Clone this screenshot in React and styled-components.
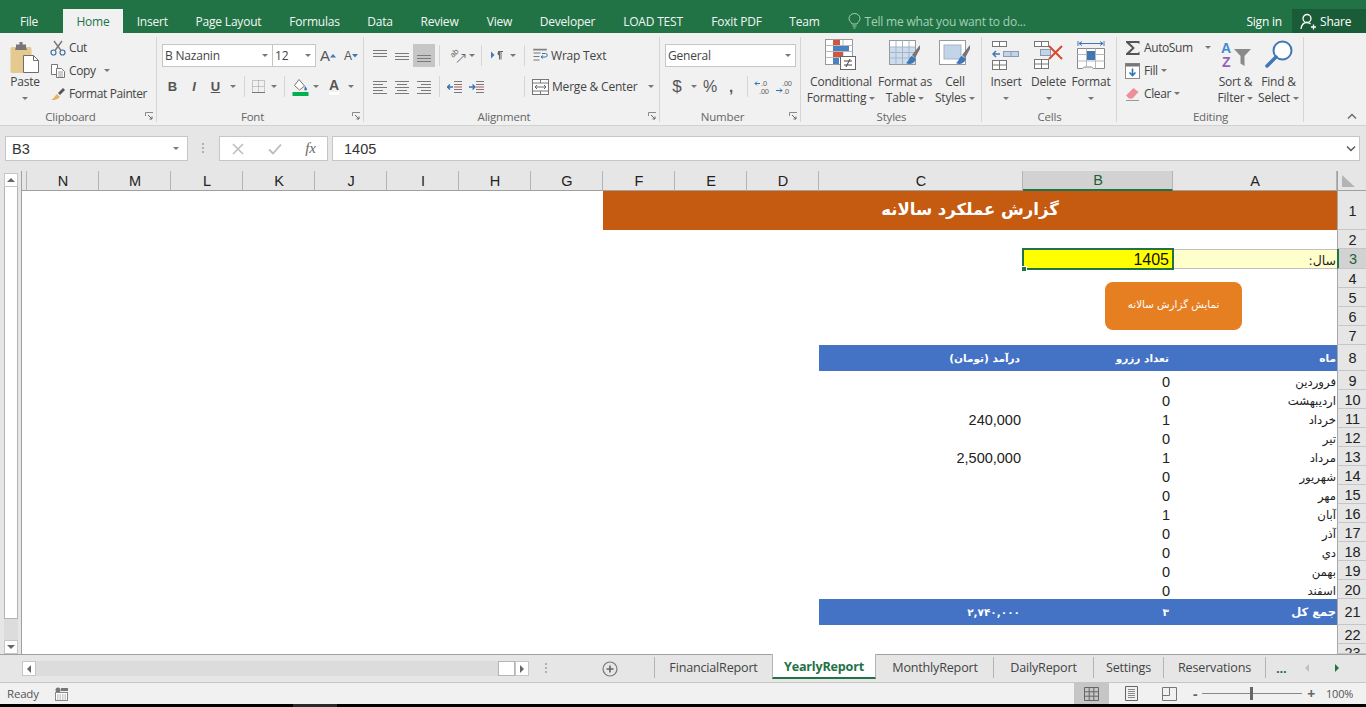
import React from 'react'
import styled, { createGlobalStyle } from 'styled-components'

const GlobalStyle = createGlobalStyle`
  html, body { margin: 0; padding: 0; background: #000; }
  * { box-sizing: border-box; }
`

const UI_FONT = '"Open Sans", "DejaVu Sans", sans-serif'
const CELL_FONT = '"Liberation Sans", Arial, sans-serif'
const FA_FONT = '"DejaVu Sans", sans-serif'

const Page = styled.div`
  width: 1366px;
  height: 707px;
  display: flex;
  flex-direction: column;
  overflow: hidden;
  background: #000;
  font-family: ${UI_FONT};
  font-size: 12px;
  letter-spacing: -0.2px;
  color: #444;
`

/* title bar + ribbon tabs */
const TitleBar = styled.div`
  height: 33px;
  flex: none;
  display: flex;
  align-items: flex-end;
  background: #217346;
  color: #fff;
`
const RibbonTab = styled.div`
  width: ${p => p.$w}px;
  height: 24px;
  display: flex;
  align-items: center;
  justify-content: center;
  color: ${p => (p.$active ? '#217346' : '#f2f7f4')};
  background: ${p => (p.$active ? '#f1f1f1' : 'transparent')};
  &:first-child { margin-right: 5px; }
`
const TellMe = styled.div`
  flex: 1;
  height: 24px;
  margin-left: 14px;
  display: flex;
  align-items: center;
  gap: 4px;
  color: #a5cfb6;
`
const SignIn = styled.div`
  height: 24px;
  margin-right: 10px;
  display: flex;
  align-items: center;
  color: #fff;
`
const ShareBox = styled.div`
  width: 74px;
  height: 24px;
  display: flex;
  align-items: center;
  gap: 3px;
  padding-left: 8px;
  background: #1a5c38;
  color: #fff;
`

/* ribbon */
const Ribbon = styled.div`
  height: 93px;
  flex: none;
  display: flex;
  padding-top: 3px;
  background: #f1f1f1;
  border-bottom: 1px solid #d2d2d2;
  position: relative;
`
const Group = styled.div`
  width: ${p => p.$w}px;
  display: flex;
  flex-direction: column;
  position: relative;
  &::after {
    content: '';
    position: absolute;
    top: 1px;
    right: 0;
    bottom: 3px;
    width: 1px;
    background: #d6d6d6;
  }
`
const GroupBody = styled.div`
  height: 73px;
  display: flex;
  padding-left: ${p => p.$pad || 0}px;
`
const GroupFoot = styled.div`
  height: 16px;
  display: flex;
  align-items: center;
  padding-bottom: 2px;
  font-size: 11.5px;
  color: #666;
`
const GroupLabel = styled.div`
  flex: 1;
  text-align: center;
`
const Launcher = styled.div`
  width: 16px;
  display: flex;
  justify-content: center;
`
const Collapse = styled.div`
  position: absolute;
  right: 9px;
  bottom: 5px;
  display: flex;
`
const BigButton = styled.div`
  width: ${p => p.$w}px;
  display: flex;
  flex-direction: column;
  align-items: center;
  line-height: 16px;
  text-align: center;
`
const BigIcon = styled.div`
  height: 38px;
  display: flex;
  align-items: flex-start;
  justify-content: center;
  padding-top: ${p => p.$top ?? 2}px;
`
const Line = styled.div`
  height: 16px;
  display: flex;
  align-items: center;
  justify-content: center;
  gap: 3px;
  white-space: nowrap;
`
const SmallColumn = styled.div`
  width: ${p => p.$w}px;
  padding-left: ${p => p.$pad || 0}px;
  display: flex;
  flex-direction: column;
`
const SmallRow = styled.div`
  height: 23px;
  display: flex;
  align-items: center;
  white-space: nowrap;
  letter-spacing: -0.4px;
`
const SmallIcon = styled.div`
  width: 19px;
  display: flex;
  align-items: center;
`
const Caret = styled.span`
  display: inline-block;
  flex: none;
  width: 0;
  height: 0;
  margin-left: ${p => p.$l || 0}px;
  border-left: 3px solid transparent;
  border-right: 3px solid transparent;
  border-top: 3px solid ${p => p.$c || '#777'};
`
const ToolRows = styled.div`
  flex: 1;
  display: flex;
  flex-direction: column;
  gap: 8px;
  padding-top: 8px;
`
const ToolRow = styled.div`
  height: 23px;
  display: flex;
  align-items: center;
`
const Tool = styled.div`
  width: ${p => p.$w}px;
  height: 23px;
  flex: none;
  display: flex;
  align-items: center;
  justify-content: center;
  background: ${p => (p.$on ? '#c6c6c6' : 'transparent')};
`
const Sep = styled.div`
  width: 1px;
  height: 21px;
  flex: none;
  margin: 0 ${p => p.$r ?? 4}px 0 ${p => p.$l ?? 4}px;
  background: #d6d6d6;
`
const Combo = styled.div`
  width: ${p => p.$w}px;
  height: 23px;
  flex: none;
  display: flex;
  align-items: center;
  justify-content: space-between;
  padding: 0 4px 0 2px;
  background: #fff;
  border: 1px solid #c6c6c6;
  border-left-width: ${p => (p.$joined ? 0 : 1)}px;
`
const FontLetter = styled.span`
  font-family: ${CELL_FONT};
  font-size: ${p => p.$s || 13}px;
  font-weight: ${p => (p.$b ? 700 : 400)};
  font-style: ${p => (p.$i ? 'italic' : 'normal')};
  text-decoration: ${p => (p.$u ? 'underline' : 'none')};
  color: #555;
  letter-spacing: 0;
`
const FontColorLetter = styled(FontLetter)`
  border-bottom: 3px solid #fff;
  line-height: 13px;
`
const TextTool = styled.div`
  display: flex;
  align-items: center;
  gap: 3px;
  white-space: nowrap;
`

/* formula bar */
const FormulaBar = styled.div`
  height: 45px;
  flex: none;
  display: flex;
  align-items: flex-start;
  padding: 10px 0 0 5px;
  background: #e6e6e6;
`
const FieldBox = styled.div`
  width: ${p => p.$w}px;
  height: 25px;
  flex: none;
  display: flex;
  align-items: center;
  justify-content: space-between;
  padding: 0 ${p => p.$pr ?? 8}px 0 ${p => p.$pl ?? 6}px;
  background: #fff;
  border: 1px solid #c6c6c6;
  font-family: ${CELL_FONT};
  font-size: 14.5px;
  letter-spacing: 0;
  color: #333;
`
const Grip = styled.div`
  width: ${p => p.$w}px;
  height: 25px;
  flex: none;
  display: flex;
  align-items: center;
  justify-content: center;
`
const FxMark = styled.span`
  font-family: "Liberation Serif", serif;
  font-style: italic;
  font-size: 15px;
  color: #666;
`

/* sheet */
const Sheet = styled.div`
  height: 483px;
  flex: none;
  display: flex;
  background: #e6e6e6;
`
const VScroll = styled.div`
  width: 22px;
  flex: none;
  display: flex;
  flex-direction: column;
  padding: 2px 3px 0 4px;
  border-right: 1px solid #a0a0a0;
`
const ScrollButton = styled.div`
  width: 14px;
  height: ${p => p.$h || 14}px;
  flex: none;
  display: flex;
  align-items: center;
  justify-content: center;
  background: #fff;
  border: 1px solid #c6c6c6;
`
const VThumb = styled.div`
  height: 432px;
  flex: none;
  background: #fff;
  border: 1px solid #b4b4b4;
  border-top: 0;
`
const VTrack = styled.div`
  flex: 1;
  background: #dcdcdc;
`
const Grid = styled.div`
  position: relative;
  flex: 1;
  display: grid;
  direction: rtl;
  grid-template-columns: 29px 164px 150px 204px repeat(11, 72px) 5px;
  grid-template-rows: 20px 39px 19px 20px 19px 19px 19px 19px 26px repeat(12, 19px) 26px 19px 10px;
  background: #fff;
  overflow: hidden;
  font-family: ${CELL_FONT};
  letter-spacing: 0;
`
const Corner = styled.div`
  background: #e6e6e6;
  border-bottom: 1px solid #a0a0a0;
  border-left: 1px solid #a0a0a0;
  position: relative;
  &::after {
    content: '';
    position: absolute;
    left: 4px;
    top: 4px;
    width: 13px;
    height: 12px;
    background: #b4b4b4;
    clip-path: polygon(0 0, 100% 100%, 0 100%);
  }
`
const ColHead = styled.div`
  display: flex;
  align-items: center;
  justify-content: center;
  padding-left: 1px;
  font-size: 14.5px;
  color: ${p => (p.$on ? '#1f5f3a' : '#222')};
  background: ${p => (p.$on ? '#d2d2d2' : '#e6e6e6')};
  border-right: 1px solid #b4b4b4;
  border-bottom: ${p => (p.$on ? '2px solid #217346' : '1px solid #a0a0a0')};
`
const RowHead = styled.div`
  grid-column: 1;
  display: flex;
  justify-content: center;
  align-items: ${p => (p.$cut ? 'flex-start' : 'center')};
  padding: ${p => (p.$cut ? 0 : 1)}px 0 0 1px;
  font-size: 14.5px;
  line-height: 18px;
  overflow: hidden;
  color: ${p => (p.$on ? '#1f5f3a' : '#222')};
  background: ${p => (p.$on ? '#d2d2d2' : '#e6e6e6')};
  border-bottom: 1px solid #c6c6c6;
  border-left: 1px solid ${p => (p.$on ? '#217346' : '#a8a8a8')};
  ${p => p.$on && 'border-left-width: 2px;'}
`
const Banner = styled.div`
  grid-column: span 6;
  display: flex;
  align-items: center;
  justify-content: center;
  padding-bottom: 2px;
  background: #c55a11;
  color: #fff;
  font-family: ${FA_FONT};
  font-weight: 700;
  font-size: 16.5px;
`
const YearLabel = styled.div`
  display: flex;
  align-items: center;
  padding: 2px 1px 0 0;
  background: #ffffcc;
  border: 1px solid #c0c0c0;
  border-width: 1px 0;
  font-family: ${FA_FONT};
  font-size: 12.5px;
  color: #222;
`
const YearCell = styled.div`
  position: relative;
  z-index: 1;
  display: flex;
  align-items: center;
  padding: 1px 4px 0 0;
  background: #ffff00;
  box-shadow: 0 0 0 1px #217346, inset 0 0 0 1px #217346;
  font-size: 16px;
  color: #111;
`
const FillHandle = styled.span`
  position: absolute;
  left: -2px;
  bottom: -3px;
  width: 6px;
  height: 6px;
  background: #217346;
  border: 1px solid #fff;
`
const RunButton = styled.div`
  position: absolute;
  left: 1083px;
  top: 111px;
  width: 137px;
  height: 48px;
  display: flex;
  align-items: center;
  justify-content: center;
  padding-bottom: 4px;
  border-radius: 8px;
  background: #e67e22;
  color: #fff;
  font-family: ${FA_FONT};
  font-size: 10.3px;
`
const BandCell = styled.div`
  display: flex;
  align-items: center;
  padding-right: ${p => p.$pad}px;
  background: #4472c4;
  color: #fff;
  font-family: ${FA_FONT};
  font-weight: 700;
  font-size: ${p => p.$s || 10.5}px;
`
const MonthCell = styled.div`
  display: flex;
  align-items: center;
  padding: 2px 1px 0 0;
  font-family: ${FA_FONT};
  font-size: 11.7px;
  color: #222;
  overflow: hidden;
`
const NumCell = styled.div`
  display: flex;
  align-items: center;
  padding: 2px ${p => p.$pad}px 0 0;
  font-size: 14.5px;
  color: #222;
`

/* sheet tabs */
const TabBar = styled.div`
  height: 28px;
  flex: none;
  display: flex;
  align-items: flex-start;
  padding-left: 22px;
  background: #e6e6e6;
  border-top: 1px solid #a0a0a0;
`
const HScroll = styled.div`
  width: 507px;
  flex: none;
  height: 15px;
  margin-top: 6px;
  display: flex;
  background: #dcdcdc;
`
const HTrack = styled.div`
  flex: 1;
`
const HThumb = styled.div`
  width: 17px;
  background: #fff;
  border: 1px solid #b4b4b4;
`
const AddSheet = styled.div`
  width: 125px;
  height: 27px;
  flex: none;
  padding-left: 16px;
  display: flex;
  align-items: center;
  gap: 54px;
`
const SheetTab = styled.div`
  width: ${p => p.$w}px;
  height: ${p => (p.$active ? 25 : 21)}px;
  flex: none;
  display: flex;
  align-items: center;
  justify-content: center;
  margin-top: ${p => (p.$active ? -1 : 2)}px;
  padding-top: ${p => (p.$active ? 2 : 0)}px;
  font-size: 12.6px;
  font-weight: ${p => (p.$active ? 700 : 400)};
  color: ${p => (p.$active ? '#217346' : '#444')};
  background: ${p => (p.$active ? '#fff' : 'transparent')};
  border-left: 1px solid ${p => (p.$after ? 'transparent' : '#b4b4b4')};
  ${p => p.$active && `
    border-right: 1px solid #b4b4b4;
    border-bottom: 2px solid #217346;
  `}
`
const TabNav = styled.div`
  flex: 1;
  height: 21px;
  margin-top: 2px;
  display: flex;
  align-items: center;
  border-left: 1px solid #b4b4b4;
  padding-left: 10px;
`
const MoreTabs = styled.span`
  width: 27px;
  font-weight: 700;
  color: #217346;
  font-size: 13px;
`
const NavArrow = styled.span`
  width: 30px;
  display: flex;
`

/* status bar */
const StatusBar = styled.div`
  height: 22px;
  flex: none;
  display: flex;
  align-items: center;
  padding-left: 7px;
  background: #f1f1f1;
  border-top: 1px solid #c6c6c6;
  font-size: 11.5px;
  color: #555;
`
const StatusIcon = styled.div`
  margin-left: 16px;
  display: flex;
`
const ViewGroup = styled.div`
  margin-left: auto;
  height: 100%;
  display: flex;
  align-items: center;
`
const ViewButton = styled.div`
  width: ${p => p.$w}px;
  height: 100%;
  margin-right: ${p => p.$gap || 0}px;
  display: flex;
  align-items: center;
  justify-content: center;
  background: ${p => (p.$on ? '#c6c6c6' : 'transparent')};
`
const ZoomTrack = styled.div`
  width: 100px;
  height: 1px;
  margin: 0 5px;
  background: #8a8a8a;
  position: relative;
`
const ZoomThumb = styled.span`
  position: absolute;
  left: 48px;
  top: -6px;
  width: 3px;
  height: 13px;
  background: #666;
`
const ZoomMark = styled.span`
  font-size: 14px;
  font-weight: 700;
  color: #666;
`
const ZoomValue = styled.span`
  width: 51px;
  padding-left: 11px;
  font-size: 11px;
`
const BottomEdge = styled.div`
  flex: 1;
  display: flex;
  padding-left: 293px;
  background: #000;
`
const EdgeMark = styled.div`
  width: 44px;
  background: #2a2a2a;
`

/* drawings */
const Svg = ({ w = 16, h = 16, children }) => (
  <svg width={w} height={h} viewBox={`0 0 ${w} ${h}`} fill="none">{children}</svg>
)

const Lines = ({ rows, w = 14, h = 14 }) => (
  <Svg w={w} h={h}>
    {rows.map(([x1, x2, y], i) => <path key={i} d={`M${x1} ${y + 0.5}H${x2}`} stroke="#7a7a7a" />)}
  </Svg>
)

const PasteIcon = () => (
  <Svg w={30} h={33}>
    <rect x="0.5" y="6" width="21" height="26" rx="1.5" fill="#e6c98f" />
    <path d="M6 6V3.5h3.5V1h3v2.5H16V6l1 3H5z" fill="#77757a" />
    <path d="M13.5 14.5h10l5 5v12h-15z" fill="#fff" stroke="#6e6e6e" />
    <path d="M23.5 14.5v5h5" stroke="#6e6e6e" />
  </Svg>
)
const ScissorsIcon = () => (
  <Svg>
    <circle cx="3.5" cy="12.5" r="2.5" stroke="#3f6fa8" strokeWidth="1.2" />
    <circle cx="12.5" cy="12.5" r="2.5" stroke="#3f6fa8" strokeWidth="1.2" />
    <path d="M5 10.5 12 1M11 10.5 4 1" stroke="#777" strokeWidth="1.4" />
  </Svg>
)
const CopyIcon = () => (
  <Svg>
    <path d="M1.5 1.5h6v10h-6z" fill="#fff" stroke="#777" />
    <path d="M6.5 5.5h5l3 3v6h-8z" fill="#fff" stroke="#777" />
    <path d="M8 9h5M8 11h5M8 13h5" stroke="#9a9a9a" />
  </Svg>
)
const BrushIcon = () => (
  <Svg>
    <path d="M1 13.5C4 13 5 9.5 7 8l3 3c-2 2-5 4-9 2.500z" fill="#e0b45e" />
    <path d="M8 7l5-5 2 2-5 5z" fill="#55555a" />
  </Svg>
)
const GrowArrow = ({ down }) => (
  <Svg w={6} h={5}>
    <path d={down ? 'M0 1h6L3 4.500z' : 'M0 4.500h6L3 1z'} fill="#3f78b5" />
  </Svg>
)
const BordersIcon = () => (
  <Svg w={15} h={15}>
    <rect x="1.500" y="1.500" width="12" height="12" stroke="#9a9a9a" strokeDasharray="1 1" />
    <path d="M7.500 1.500v12M1.500 7.500h12" stroke="#9a9a9a" strokeDasharray="1 1" />
    <path d="M1 13.500h13" stroke="#777" />
  </Svg>
)
const BucketIcon = () => (
  <Svg w={17} h={18}>
    <path d="M7 1.500 12.500 8 7.500 12 2.500 7.500z" fill="#fff" stroke="#777" />
    <path d="M13 8c1.300 1.600 2 2.600 2 3.300a1.300 1.300 0 0 1-2.600 0C12.400 10.500 12.600 9 13 8z" fill="#3f78b5" />
    <rect x="0.500" y="14" width="16" height="4" fill="#00b050" />
  </Svg>
)
const OrientIcon = () => (
  <Svg w={18} h={17}>
    <text x="5" y="11" fontSize="8" fontFamily="Liberation Sans" fill="#666" transform="rotate(-45 5 11)">ab</text>
    <path d="M9 15.500 17 7.500M17 7.500h-3.500M17 7.500V11" stroke="#666" />
  </Svg>
)
const RtlIcon = () => (
  <Svg w={13} h={11}>
    <path d="M0 1.500v7l3.500-3.500z" fill="#3f78b5" />
    <path d="M7 1.500h5M10 1.500v8M8.500 1.500v8" stroke="#666" />
    <path d="M8.500 1.500a2 2 0 0 0 0 4z" fill="#666" />
  </Svg>
)
const IndentIcon = ({ flip }) => (
  <Svg w={16} h={14}>
    <path d="M7 1.500h8M7 4.500h8M7 9.500h8M7 12.500h8" stroke="#7a7a7a" />
    <path d={flip ? 'M6 7H0M3 4.500 0.500 7 3 9.500' : 'M0 7h6M3.500 4.500 6 7 3.500 9.500'} stroke="#2f75b5" strokeWidth="1.300" />
    <path d="M7 7h8" stroke="#c0504d" />
  </Svg>
)
const WrapIcon = () => (
  <Svg>
    <path d="M1.500 1.500h13M1.500 5h7M1.500 8.500h6M1.500 12h6" stroke="#777" />
    <rect x="1" y="0.500" width="14" height="2.500" fill="#8a8a8a" opacity="0.500" />
    <path d="M9 9h4.500a1.500 1.500 0 0 0 0-3.500H10M11 7.500 9 9l2 1.500" stroke="#2f75b5" />
  </Svg>
)
const MergeIcon = () => (
  <Svg w={17} h={16}>
    <rect x="0.500" y="0.500" width="16" height="15" fill="#fff" stroke="#777" />
    <path d="M0.500 4h16M0.500 12h16M8.500 0.500V4M8.500 12v3.500" stroke="#777" />
    <path d="M3 8h11M5 6 3 8l2 2M12 6l2 2-2 2" stroke="#666" />
  </Svg>
)
const DecimalIcon = ({ less }) => (
  <Svg w={18} h={16}>
    <text x="7" y="7" fontSize="7.500" fontFamily="Liberation Sans" fill="#666">{less ? '.0' : '.00'}</text>
    <text x={less ? 5 : 8} y="14.500" fontSize="7.500" fontFamily="Liberation Sans" fill="#666">{less ? '.00' : '.0'}</text>
    <path d={less ? 'M1 4.500h5M3 2.500l-2 2 2 2' : 'M1 11.500h6M5 9.500l2 2-2 2'} stroke="#2f75b5" />
  </Svg>
)
const CondFormatIcon = () => (
  <Svg w={32} h={32}>
    <rect x="0.500" y="0.500" width="27" height="25" fill="#fff" stroke="#999" />
    <path d="M9 .5v25M18 .5v25M.5 6.500h27M.5 12.500h27M.5 18.500h27" stroke="#b8b8b8" />
    <rect x="8" y="1" width="7" height="5" fill="#d0573f" />
    <rect x="8" y="7" width="16" height="5" fill="#4a81bf" />
    <rect x="8" y="13" width="10" height="5" fill="#d0573f" />
    <rect x="8" y="19" width="6" height="6" fill="#4a81bf" />
    <rect x="15.500" y="17.500" width="15" height="13" fill="#fff" stroke="#666" />
    <path d="M19 22h8M19 26h8M25 20l-4 8" stroke="#444" />
  </Svg>
)
const TableStyleIcon = () => (
  <Svg w={32} h={32}>
    <rect x="0.500" y="1.500" width="26" height="24" fill="#fff" stroke="#999" />
    <rect x="1" y="8" width="25" height="17" fill="#cfdcee" />
    <path d="M7 1.500v24M13.500 1.500v24M20 1.500v24M.5 8h26M.5 13.500h26M.5 19h26" stroke="#a5b5c8" />
    <path d="M31 6 23 16l3 3 5-9z" fill="#77757a" />
    <path d="M23 17c-3 1-3 5-6 7 3 2 8 1 10-4z" fill="#3f78b5" />
  </Svg>
)
const CellStyleIcon = () => (
  <Svg w={32} h={32}>
    <rect x="0.500" y="1.500" width="26" height="24" fill="#fff" stroke="#999" />
    <rect x="5" y="6" width="17" height="14" fill="#c3d3e8" stroke="#a5b5c8" />
    <path d="M31 6 23 16l3 3 5-9z" fill="#77757a" />
    <path d="M23 17c-3 1-3 5-6 7 3 2 8 1 10-4z" fill="#3f78b5" />
  </Svg>
)
const InsertIcon = () => (
  <Svg w={28} h={30}>
    <rect x="0.500" y="1.500" width="14" height="5" fill="#fff" stroke="#777" />
    <path d="M7.500 1.500v5" stroke="#777" />
    <path d="M1 14h7M4 11l-3 3 3 3" stroke="#3f78b5" strokeWidth="1.500" />
    <rect x="11.500" y="11.500" width="15" height="5" fill="#c3d3e8" stroke="#8a9ab0" />
    <path d="M19 11.500v5" stroke="#8a9ab0" />
    <rect x="0.500" y="20.500" width="14" height="9" fill="#fff" stroke="#777" />
    <path d="M7.500 20.500v9M.5 25h14" stroke="#777" />
  </Svg>
)
const DeleteIcon = () => (
  <Svg w={30} h={30}>
    <rect x="0.500" y="1.500" width="14" height="5" fill="#fff" stroke="#777" />
    <path d="M7.500 1.500v5" stroke="#777" />
    <rect x="6.500" y="9.500" width="10" height="6" fill="#c3d3e8" stroke="#8a9ab0" />
    <path d="M15 6 28 19M28 6 15 19" stroke="#d9492e" strokeWidth="2" />
    <rect x="0.500" y="19.500" width="14" height="9" fill="#fff" stroke="#777" />
    <path d="M7.500 19.500v9M.5 24h14" stroke="#777" />
  </Svg>
)
const FormatIcon = () => (
  <Svg w={28} h={32}>
    <path d="M1 2v5M27 2v5M2 4.500h24M2 4.500l3-2M2 4.500l3 2M26 4.500l-3-2M26 4.500l-3 2" stroke="#3f78b5" />
    <path d="M.5 9.500h27v20h-11l-2-1.500h-7l-2 1.500h-5z" fill="#fff" stroke="#8a8a8a" />
    <path d="M9.500 9.500v18M18.500 9.500v20M.5 15.500h27M.5 22h27" stroke="#b8b8b8" />
    <rect x="10" y="12" width="8" height="9" fill="#3f78b5" />
  </Svg>
)
const SigmaIcon = () => (
  <Svg w={16} h={16}>
    <path d="M1 1h13.500v3L12.800 3H4.800l5 5-5 5h8.200l1.500-1.500V15H1v-1.500L7 8 1 2.500z" fill="#555" />
  </Svg>
)
const FillDownIcon = () => (
  <Svg w={15} h={16}>
    <rect x="0.500" y="0.500" width="14" height="15" fill="#fff" stroke="#8a8a8a" />
    <rect x="0.500" y="0.500" width="14" height="3" fill="#777" />
    <path d="M7.500 5.500v7M4.500 9.500l3 3 3-3" stroke="#2f75b5" strokeWidth="1.600" />
  </Svg>
)
const EraserIcon = () => (
  <Svg w={15} h={15}>
    <path d="M1 9.500 8.500 2l5 4-6 6.500H4z" fill="#ee8e98" />
    <path d="M1 14.500h13" stroke="#999" />
  </Svg>
)
const SortIcon = () => (
  <Svg w={32} h={30}>
    <text x="1" y="13" fontSize="14" fontWeight="700" fontFamily="Liberation Sans" fill="#3f8bd0">A</text>
    <text x="2" y="27" fontSize="14" fontWeight="700" fontFamily="Liberation Sans" fill="#9460b8">Z</text>
    <path d="M14 9h17l-6.500 7v10l-4-2.500V16z" fill="#8a8a8a" />
  </Svg>
)
const FindIcon = () => (
  <Svg w={30} h={30}>
    <circle cx="18.500" cy="10.500" r="9" fill="#fff" stroke="#3f78b5" strokeWidth="2" />
    <path d="M12 17 3 26" stroke="#3f78b5" strokeWidth="3.500" strokeLinecap="round" />
  </Svg>
)
const ShareIcon = () => (
  <Svg w={17} h={17}>
    <circle cx="7" cy="5.500" r="4" stroke="#fff" strokeWidth="1.300" />
    <path d="M1 16c.5-4 3-6.500 6-6.500 1.500 0 2.500.500 3.500 1.500M11 14h5M13.500 11.500v5" stroke="#fff" strokeWidth="1.300" />
  </Svg>
)
const BulbIcon = () => (
  <Svg w={13} h={16}>
    <path d="M4 11C3 8.500 1 8 1 5.500a5.500 5 0 0 1 11 0C12 8 10 8.500 9 11zM4.500 13h4M5.500 15h2" stroke="#a5cfb6" />
  </Svg>
)
const LauncherIcon = () => (
  <Svg w={9} h={9}>
    <path d="M.5 4V.5H8M.5.5" stroke="#8a8a8a" />
    <path d="M3 3l4 4M7 4.500V7H4.500" stroke="#666" />
  </Svg>
)
const ChevronUp = () => (
  <Svg w={10} h={7}>
    <path d="M1 5.500 5 1.500l4 4" stroke="#666" strokeWidth="1.400" />
  </Svg>
)
const ChevronDown = () => (
  <Svg w={10} h={7}>
    <path d="M1 1.500 5 5.500l4-4" stroke="#555" strokeWidth="1.400" />
  </Svg>
)
const CrossIcon = () => (
  <Svg w={12} h={12}>
    <path d="M1 1l10 10M11 1 1 11" stroke="#bcbcbc" strokeWidth="1.500" />
  </Svg>
)
const TickIcon = () => (
  <Svg w={14} h={12}>
    <path d="M1 6.500 5 10.500 13 1.500" stroke="#bcbcbc" strokeWidth="1.800" />
  </Svg>
)
const DotsIcon = () => (
  <Svg w={3} h={11}>
    <path d="M0 0h2v2H0zM0 4h2v2H0zM0 8h2v2H0z" fill="#b0b0b0" />
  </Svg>
)
const Arrow = ({ dir = 'right', c = '#555', s = 4 }) => (
  <Svg w={s * 2} h={s * 2}>
    <path
      d={{
        up: `M0 ${s * 1.500}H${s * 2}L${s} ${s / 2}z`,
        down: `M0 ${s / 2}H${s * 2}L${s} ${s * 1.500}z`,
        left: `M${s * 1.500} 0V${s * 2}L${s / 2} ${s}z`,
        right: `M${s / 2} 0V${s * 2}L${s * 1.500} ${s}z`,
      }[dir]}
      fill={c}
    />
  </Svg>
)
const PlusCircle = () => (
  <Svg w={16} h={16}>
    <circle cx="8" cy="8" r="7" stroke="#777" strokeWidth="1.200" />
    <path d="M4.500 8h7M8 4.500v7" stroke="#666" strokeWidth="1.600" />
  </Svg>
)
const MacroIcon = () => (
  <Svg w={13} h={14}>
    <circle cx="3" cy="3" r="2.500" fill="#777" />
    <path d="M6 1h7v3H6z" fill="#777" />
    <rect x="0.500" y="5.500" width="12" height="8" fill="#fff" stroke="#888" />
    <path d="M2 8h9M2 10h9M2 12h9" stroke="#999" strokeDasharray="1.500 1" />
  </Svg>
)
const NormalView = () => (
  <Svg w={15} h={14}>
    <path d="M.5.5h14v13H.5zM5.200.5v13M9.800.5v13M.5 4.800h14M.5 9.200h14" stroke="#666" />
  </Svg>
)
const LayoutView = () => (
  <Svg w={13} h={15}>
    <path d="M.5.5h12v14H.5z" stroke="#666" />
    <path d="M3 3.500h7M3 5.500h7M3 7.500h7M3 9.500h7M3 11.500h7" stroke="#888" />
  </Svg>
)
const BreakView = () => (
  <Svg w={15} h={14}>
    <path d="M.5.5h14v13H.5zM7.500.5v8M.5 8.500h7" stroke="#777" />
  </Svg>
)

/* data */
const ribbonTabs = [
  ['File', 58], ['Home', 60, true], ['Insert', 58.5], ['Page Layout', 94], ['Formulas', 78],
  ['Data', 53], ['Review', 66], ['View', 54], ['Developer', 82], ['LOAD TEST', 89],
  ['Foxit PDF', 78], ['Team', 58],
]
const columns = ['A', 'B', 'C', 'D', 'E', 'F', 'G', 'H', 'I', 'J', 'K', 'L', 'M', 'N']
const months = [
  ['فروردین', 0, ''], ['اردیبهشت', 0, ''], ['خرداد', 1, '240,000'], ['تیر', 0, ''],
  ['مرداد', 1, '2,500,000'], ['شهریور', 0, ''], ['مهر', 0, ''], ['آبان', 1, ''],
  ['آذر', 0, ''], ['دي', 0, ''], ['بهمن', 0, ''], ['اسفند', 0, ''],
]
const sheetTabs = [
  ['FinancialReport', 118], ['YearlyReport', 104, true], ['MonthlyReport', 117],
  ['DailyReport', 100], ['Settings', 70], ['Reservations', 102],
]

const Foot = ({ label, launcher }) => (
  <GroupFoot>
    <GroupLabel>{label}</GroupLabel>
    {launcher && <Launcher><LauncherIcon /></Launcher>}
  </GroupFoot>
)

const Big = ({ w, icon, lines, top }) => (
  <BigButton $w={w}>
    <BigIcon $top={top}>{icon}</BigIcon>
    {lines.map(([text, caret], i) => (
      <Line key={i}>{text}{caret && <Caret />}</Line>
    ))}
  </BigButton>
)

const App = () => (
  <Page>
    <GlobalStyle />
    <TitleBar>
      {ribbonTabs.map(([name, w, active]) => (
        <RibbonTab key={name} $w={w} $active={active}>{name}</RibbonTab>
      ))}
      <TellMe><BulbIcon />Tell me what you want to do...</TellMe>
      <SignIn>Sign in</SignIn>
      <ShareBox><ShareIcon />Share</ShareBox>
    </TitleBar>

    <Ribbon>
      <Group $w={157}>
        <GroupBody $pad={4}>
          <Big w={42} top={5} icon={<PasteIcon />} lines={[['Paste'], ['', true]]} />
          <SmallColumn $w={105} $pad={4}>
            <SmallRow><SmallIcon><ScissorsIcon /></SmallIcon>Cut</SmallRow>
            <SmallRow><SmallIcon><CopyIcon /></SmallIcon>Copy<Caret $l={8} /></SmallRow>
            <SmallRow><SmallIcon><BrushIcon /></SmallIcon>Format Painter</SmallRow>
          </SmallColumn>
        </GroupBody>
        <Foot label="Clipboard" launcher />
      </Group>

      <Group $w={207}>
        <GroupBody $pad={5}>
          <ToolRows>
            <ToolRow>
              <Combo $w={111}>B Nazanin<Caret /></Combo>
              <Combo $w={43} $joined>12<Caret /></Combo>
              <Tool $w={24}><FontLetter $s={15}>A</FontLetter><GrowArrow /></Tool>
              <Tool $w={22}><FontLetter $s={12}>A</FontLetter><GrowArrow down /></Tool>
            </ToolRow>
            <ToolRow>
              <Tool $w={21}><FontLetter $b>B</FontLetter></Tool>
              <Tool $w={22}><FontLetter $i $b>I</FontLetter></Tool>
              <Tool $w={21}><FontLetter $b $u>U</FontLetter></Tool>
              <Tool $w={14}><Caret /></Tool>
              <Sep />
              <Tool $w={18}><BordersIcon /></Tool>
              <Tool $w={14}><Caret /></Tool>
              <Sep $l={3} />
              <Tool $w={22}><BucketIcon /></Tool>
              <Tool $w={10}><Caret /></Tool>
              <Tool $w={26}><FontColorLetter $b $s={14}>A</FontColorLetter></Tool>
              <Tool $w={8}><Caret /></Tool>
            </ToolRow>
          </ToolRows>
        </GroupBody>
        <Foot label="Font" launcher />
      </Group>

      <Group $w={296}>
        <GroupBody $pad={5}>
          <ToolRows>
            <ToolRow>
              <Tool $w={22}><Lines rows={[[0, 14, 1], [0, 14, 4], [0, 14, 7]]} /></Tool>
              <Tool $w={22}><Lines rows={[[0, 14, 4], [0, 14, 7], [0, 14, 10]]} /></Tool>
              <Tool $w={22} $on><Lines rows={[[0, 14, 6], [0, 14, 9], [0, 14, 12]]} /></Tool>
              <Sep $r={7} />
              <Tool $w={20}><OrientIcon /></Tool>
              <Tool $w={10}><Caret /></Tool>
              <Sep $r={6} />
              <Tool $w={18}><RtlIcon /></Tool>
              <Tool $w={14}><Caret /></Tool>
              <Sep $r={7} />
              <TextTool><WrapIcon />Wrap Text</TextTool>
            </ToolRow>
            <ToolRow>
              <Tool $w={22}><Lines rows={[[0, 14, 1], [0, 10, 4], [0, 14, 7], [0, 10, 10], [0, 14, 13]]} /></Tool>
              <Tool $w={22}><Lines rows={[[0, 14, 1], [2, 12, 4], [0, 14, 7], [2, 12, 10], [0, 14, 13]]} /></Tool>
              <Tool $w={22}><Lines rows={[[0, 14, 1], [4, 14, 4], [0, 14, 7], [4, 14, 10], [0, 14, 13]]} /></Tool>
              <Sep />
              <Tool $w={22}><IndentIcon flip /></Tool>
              <Tool $w={22}><IndentIcon /></Tool>
              <Sep $l={36} $r={7} />
              <TextTool><MergeIcon />Merge &amp; Center<Caret $l={8} /></TextTool>
            </ToolRow>
          </ToolRows>
        </GroupBody>
        <Foot label="Alignment" launcher />
      </Group>

      <Group $w={141}>
        <GroupBody $pad={5}>
          <ToolRows>
            <ToolRow><Combo $w={131}>General<Caret /></Combo></ToolRow>
            <ToolRow>
              <Tool $w={24}><FontLetter $s={17}>$</FontLetter></Tool>
              <Tool $w={10}><Caret /></Tool>
              <Tool $w={22}><FontLetter $s={16}>%</FontLetter></Tool>
              <Tool $w={20}><FontLetter $s={15} $b>,</FontLetter></Tool>
              <Sep $l={6} />
              <Tool $w={21}><DecimalIcon less /></Tool>
              <Tool $w={21}><DecimalIcon /></Tool>
            </ToolRow>
          </ToolRows>
        </GroupBody>
        <Foot label="Number" launcher />
      </Group>

      <Group $w={181}>
        <GroupBody $pad={7}>
          <Big w={66} icon={<CondFormatIcon />} top={3} lines={[['Conditional'], ['Formatting', true]]} />
          <Big w={62} icon={<TableStyleIcon />} top={3} lines={[['Format as'], ['Table', true]]} />
          <Big w={38} icon={<CellStyleIcon />} top={3} lines={[['Cell'], ['Styles', true]]} />
        </GroupBody>
        <Foot label="Styles" />
      </Group>

      <Group $w={135}>
        <GroupBody $pad={3}>
          <Big w={42} icon={<InsertIcon />} top={4} lines={[['Insert'], ['', true]]} />
          <Big w={43} icon={<DeleteIcon />} top={4} lines={[['Delete'], ['', true]]} />
          <Big w={42} icon={<FormatIcon />} top={3} lines={[['Format'], ['', true]]} />
        </GroupBody>
        <Foot label="Cells" />
      </Group>

      <Group $w={187}>
        <GroupBody $pad={8}>
          <SmallColumn $w={89}>
            <SmallRow><SmallIcon><SigmaIcon /></SmallIcon>AutoSum<Caret $l={12} /></SmallRow>
            <SmallRow><SmallIcon><FillDownIcon /></SmallIcon>Fill<Caret $l={3} /></SmallRow>
            <SmallRow><SmallIcon><EraserIcon /></SmallIcon>Clear<Caret $l={3} /></SmallRow>
          </SmallColumn>
          <Big w={43} icon={<SortIcon />} top={4} lines={[['Sort &'], ['Filter', true]]} />
          <Big w={43} icon={<FindIcon />} top={4} lines={[['Find &'], ['Select', true]]} />
        </GroupBody>
        <Foot label="Editing" />
      </Group>

      <Collapse><ChevronUp /></Collapse>
    </Ribbon>

    <FormulaBar>
      <FieldBox $w={183}>B3<Caret $c="#777" /></FieldBox>
      <Grip $w={31}><DotsIcon /></Grip>
      <FieldBox $w={109} $pl={12} $pr={11}><CrossIcon /><TickIcon /><FxMark>fx</FxMark></FieldBox>
      <Grip $w={4} />
      <FieldBox $w={1028} $pl={11} $pr={3}>1405<ChevronDown /></FieldBox>
    </FormulaBar>

    <Sheet>
      <VScroll>
        <ScrollButton><Arrow dir="up" c="#666" /></ScrollButton>
        <VThumb />
        <VTrack />
        <ScrollButton><Arrow dir="down" c="#666" /></ScrollButton>
      </VScroll>
      <Grid>
        <Corner />
        {columns.map(c => <ColHead key={c} $on={c === 'B'}>{c}</ColHead>)}
        <ColHead />

        <RowHead>1</RowHead>
        <Banner>گزارش عملکرد سالانه</Banner>
        <RowHead>2</RowHead>
        <RowHead $on>3</RowHead>
        <YearLabel>سال:</YearLabel>
        <YearCell>1405<FillHandle /></YearCell>
        {[4, 5, 6, 7].map(n => <RowHead key={n}>{n}</RowHead>)}

        <RowHead>8</RowHead>
        <BandCell $pad={1}>ماه</BandCell>
        <BandCell $pad={4}>تعداد رزرو</BandCell>
        <BandCell $pad={3}>درآمد (تومان)</BandCell>

        {months.map(([name, count, income], i) => (
          <React.Fragment key={name}>
            <RowHead>{i + 9}</RowHead>
            <MonthCell>{name}</MonthCell>
            <NumCell $pad={3}>{count}</NumCell>
            <NumCell $pad={2}>{income}</NumCell>
          </React.Fragment>
        ))}

        <RowHead>21</RowHead>
        <BandCell $pad={1} $s={11.5}>جمع کل</BandCell>
        <BandCell $pad={4}>۳</BandCell>
        <BandCell $pad={3}>۲,۷۴۰,۰۰۰</BandCell>
        <RowHead>22</RowHead>
        <RowHead $cut>23</RowHead>

        <RunButton>نمایش گزارش سالانه</RunButton>
      </Grid>
    </Sheet>

    <TabBar>
      <HScroll>
        <ScrollButton $h={15}><Arrow dir="left" c="#666" /></ScrollButton>
        <HTrack />
        <HThumb />
        <ScrollButton $h={15}><Arrow dir="right" c="#666" /></ScrollButton>
      </HScroll>
      <AddSheet>
        <DotsIcon />
        <PlusCircle />
      </AddSheet>
      {sheetTabs.map(([name, w, active], i) => (
        <SheetTab key={name} $w={w} $active={active} $after={sheetTabs[i - 1]?.[2]}>{name}</SheetTab>
      ))}
      <TabNav>
        <MoreTabs>...</MoreTabs>
        <NavArrow><Arrow dir="left" c="#c0c0c0" /></NavArrow>
        <NavArrow><Arrow dir="right" c="#217346" /></NavArrow>
      </TabNav>
    </TabBar>

    <StatusBar>
      Ready
      <StatusIcon><MacroIcon /></StatusIcon>
      <ViewGroup>
        <ViewButton $w={35} $gap={4} $on><NormalView /></ViewButton>
        <ViewButton $w={38}><LayoutView /></ViewButton>
        <ViewButton $w={38} $gap={4}><BreakView /></ViewButton>
        <ZoomMark>-</ZoomMark>
        <ZoomTrack><ZoomThumb /></ZoomTrack>
        <ZoomMark>+</ZoomMark>
        <ZoomValue>100%</ZoomValue>
      </ViewGroup>
    </StatusBar>
    <BottomEdge><EdgeMark /></BottomEdge>
  </Page>
)

export default App
